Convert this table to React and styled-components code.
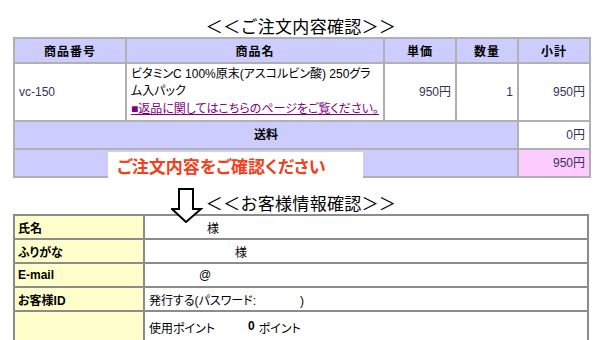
import React from "react";
import styled, { createGlobalStyle } from "styled-components";

const GlobalStyle = createGlobalStyle`
body {
    margin: 0;
    background: #fff;
    color: #000;
    font-family: "Liberation Sans", "Noto Sans CJK JP", sans-serif;
    font-feature-settings: "palt";
}
`

export const Page = styled.div`
width: 576px;
margin-left: 13px;
padding-top: 14px;
`

export const SectionTitle = styled.h2`
margin: 0;
height: 23px;
line-height: 23px;
text-align: center;
font-size: 17px;
font-weight: normal;
font-family: "Noto Sans CJK JP", sans-serif;
font-feature-settings: normal;
letter-spacing: 0.3px;
`

export const OrderBox = styled.div`
position: relative;
`

export const OrderTable = styled.table`
width: 576px;
table-layout: fixed;
border-collapse: collapse;
border: 2px solid #9c9c9c;
font-size: 12px;
`

export const HeadCell = styled.th`
height: 23px;
padding: 0;
background: #ccccff;
border: 2px solid #b0b0b0;
font-weight: bold;
letter-spacing: 1px;
text-align: center;
`

export const Cell = styled.td`
padding: 0 4px;
border: 2px solid #b0b0b0;
background: ${p => p.$bg || "#fff"};
text-align: ${p => p.$align || "left"};
color: ${p => p.$tone || "#000"};
height: ${p => p.$h || "26px"};
font-weight: ${p => p.$bold ? "bold" : "normal"};
line-height: 17px;
`

export const ReturnLink = styled.a`
display: inline-block;
margin-top: 1px;
color: #800080;
text-decoration: underline;
white-space: nowrap;
`

export const Notice = styled.div`
position: absolute;
left: 95px;
top: 115px;
width: 255px;
height: 26px;
background: #fff;
padding-left: 9px;
box-sizing: border-box;
color: #f0401c;
font-family: "Noto Sans CJK JP", sans-serif;
font-weight: bold;
font-size: 17px;
line-height: 28px;
white-space: nowrap;
`

export const ArrowRow = styled.div`
position: relative;
height: 36px;
display: flex;
align-items: flex-end;
justify-content: center;
`

export const ArrowMark = styled.svg`
position: absolute;
left: 158px;
top: 10px;
width: 32px;
height: 35px;
z-index: 2;
`

export const CustomerTable = styled.table`
width: 576px;
table-layout: fixed;
border-collapse: collapse;
border: 2px solid #6e6e6e;
font-size: 12px;
`

export const Label = styled.td`
width: 122px;
height: 22px;
padding: 0 3px;
background: #ffffcc;
border: 2px solid #8c8c8c;
font-weight: bold;
`

export const Value = styled.td`
height: ${p => p.$h || "22px"};
padding: 0 0 0 ${p => p.$indent || "4px"};
border: 2px solid #8c8c8c;
vertical-align: ${p => p.$top ? "top" : "middle"};
white-space: nowrap;
`

export const PointLine = styled.div`
display: flex;
padding: 7px 0 0 0;
& > b {
    margin-left: 33px;
    margin-right: 4px;
}
`

const DownArrow = () => (
    <ArrowMark viewBox="0 0 32 35">
        <path d="M8 1 H22 V21 H30 L15 34 L1 21 H8 Z" fill="#fff" stroke="#000" strokeWidth="2" strokeLinejoin="miter" />
    </ArrowMark>
)

const App = () => {
    return (
        <Page>
            <GlobalStyle />
            <SectionTitle>＜＜ご注文内容確認＞＞</SectionTitle>
            <OrderBox>
                <OrderTable>
                    <colgroup>
                        <col style={{ width: "112px" }} />
                        <col style={{ width: "258px" }} />
                        <col style={{ width: "72px" }} />
                        <col style={{ width: "62px" }} />
                        <col style={{ width: "72px" }} />
                    </colgroup>
                    <thead>
                        <tr>
                            <HeadCell>商品番号</HeadCell>
                            <HeadCell>商品名</HeadCell>
                            <HeadCell>単価</HeadCell>
                            <HeadCell>数量</HeadCell>
                            <HeadCell>小計</HeadCell>
                        </tr>
                    </thead>
                    <tbody>
                        <tr>
                            <Cell $h="56px" $tone="#33335a">vc-150</Cell>
                            <Cell $h="56px" style={{ whiteSpace: "nowrap" }}>
                                ビタミンC 100%原末(アスコルビン酸) 250グラ<br />
                                ム入パック<br />
                                <ReturnLink href="#">■返品に関してはこちらのページをご覧ください。</ReturnLink>
                            </Cell>
                            <Cell $h="56px" $align="right" $tone="#33335a">950円</Cell>
                            <Cell $h="56px" $align="right" $tone="#33335a">1</Cell>
                            <Cell $h="56px" $align="right" $tone="#33335a">950円</Cell>
                        </tr>
                        <tr>
                            <Cell colSpan={4} $bg="#ccccff" $align="center" $bold>送料</Cell>
                            <Cell $align="right" $tone="#33335a">0円</Cell>
                        </tr>
                        <tr>
                            <Cell colSpan={4} $bg="#ccccff"></Cell>
                            <Cell $bg="#ffccff" $align="right" $tone="#33335a">950円</Cell>
                        </tr>
                    </tbody>
                </OrderTable>
                <Notice>ご注文内容をご確認ください</Notice>
            </OrderBox>

            <ArrowRow>
                <DownArrow />
                <SectionTitle>＜＜お客様情報確認＞＞</SectionTitle>
            </ArrowRow>

            <CustomerTable>
                <tbody>
                    <tr>
                        <Label>氏名</Label>
                        <Value $indent="62px">様</Value>
                    </tr>
                    <tr>
                        <Label>ふりがな</Label>
                        <Value $indent="90px">様</Value>
                    </tr>
                    <tr>
                        <Label>E-mail</Label>
                        <Value $indent="54px">@</Value>
                    </tr>
                    <tr>
                        <Label>お客様ID</Label>
                        <Value>発行する(パスワード:<span style={{ marginLeft: "44px" }}>)</span></Value>
                    </tr>
                    <tr>
                        <Label></Label>
                        <Value $h="40px" $top>
                            <PointLine>使用ポイント<b>0</b>ポイント</PointLine>
                        </Value>
                    </tr>
                </tbody>
            </CustomerTable>
        </Page>
    )
}

export default App
